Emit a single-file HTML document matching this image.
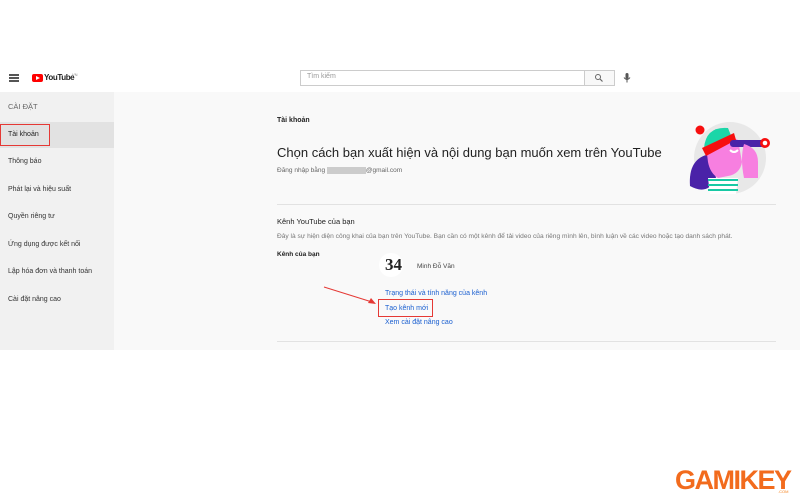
<!DOCTYPE html>
<html><head><meta charset="utf-8"><style>
*{margin:0;padding:0;box-sizing:border-box}
body{width:800px;height:500px;background:#fff;font-family:"Liberation Sans",Arial,sans-serif;position:relative;overflow:hidden;color:#222}
.a{position:absolute}
.side{left:0;top:92px;width:114px;height:258px;background:#f1f1f1}
.main{left:114px;top:92px;width:686px;height:258px;background:#f9f9f9}
.si{position:absolute;left:8px;font-size:7px;color:#333}
.link{position:absolute;left:385px;font-size:7px;color:#1a5fd0}
</style></head><body>
<div class="a" style="left:9px;top:74px;width:10px;height:1.5px;background:#555;box-shadow:0 3px 0 #555,0 6px 0 #555"></div>
<div class="a" style="left:32px;top:74px;width:11px;height:8px;background:#f00;border-radius:2px"></div>
<div class="a" style="left:36px;top:76px;width:0;height:0;border-left:4px solid #fff;border-top:2px solid transparent;border-bottom:2px solid transparent"></div>
<div class="a" style="left:44px;top:73px;font-size:8px;font-weight:bold;letter-spacing:-0.4px;color:#222">YouTube</div>
<div class="a" style="left:72px;top:72px;font-size:4px;color:#888">VN</div>
<div class="a" style="left:300px;top:70px;width:285px;height:16px;border:1px solid #ccc;background:#fff"></div>
<div class="a" style="left:307px;top:73px;font-size:7px;color:#999">Tìm kiếm</div>
<div class="a" style="left:584px;top:70px;width:31px;height:16px;border:1px solid #ccc;background:#f8f8f8"></div>
<svg class="a" style="left:594px;top:73px" width="10" height="10" viewBox="0 0 10 10"><circle cx="4" cy="4" r="2.5" fill="none" stroke="#666" stroke-width="1"/><path d="M6 6 L8.5 8.5" stroke="#666" stroke-width="1.2"/></svg>
<svg class="a" style="left:622px;top:72px" width="10" height="12" viewBox="0 0 10 12"><rect x="3.5" y="1" width="3" height="6" rx="1.5" fill="#555"/><path d="M2 5.5 Q5 9.5 8 5.5 M5 8 V10.5" stroke="#555" fill="none" stroke-width="1"/></svg>
<div class="a side"></div>
<div class="si" style="top:102px;font-size:7.5px;color:#666">CÀI ĐẶT</div>
<div class="a" style="left:0;top:122px;width:114px;height:26px;background:#e2e2e2"></div>
<div class="a" style="left:0;top:124px;width:50px;height:22px;border:1.5px solid #e53935"></div>
<div class="si" style="top:131px;color:#222">Tài khoản</div>
<div class="si" style="top:158px">Thông báo</div>
<div class="si" style="top:186px">Phát lại và hiệu suất</div>
<div class="si" style="top:213px">Quyền riêng tư</div>
<div class="si" style="top:241px">Ứng dụng được kết nối</div>
<div class="si" style="top:268px">Lập hóa đơn và thanh toán</div>
<div class="si" style="top:296px">Cài đặt nâng cao</div>
<div class="a main"></div>
<div class="a" style="left:277px;top:117px;font-size:7px;font-weight:bold">Tài khoản</div>
<div class="a" style="left:277px;top:145px;font-size:13px;color:#222">Chọn cách bạn xuất hiện và nội dung bạn muốn xem trên YouTube</div>
<div class="a" style="left:277px;top:167px;font-size:6.5px;color:#666">Đăng nhập bằng <span style="background:#ccc;color:transparent">xxxxxxxxxxxx</span>@gmail.com</div>
<div class="a" style="left:277px;top:204px;width:499px;height:1px;background:#e2e2e2"></div>
<div class="a" style="left:277px;top:217px;font-size:7.5px;color:#222">Kênh YouTube của bạn</div>
<div class="a" style="left:277px;top:233px;font-size:6.6px;color:#777;white-space:nowrap">Đây là sự hiện diện công khai của bạn trên YouTube. Bạn cần có một kênh để tải video của riêng mình lên, bình luận về các video hoặc tạo danh sách phát.</div>
<div class="a" style="left:277px;top:251px;font-size:6.5px;font-weight:bold">Kênh của bạn</div>
<div class="a" style="left:379px;top:253px;width:24px;height:24px;border-radius:50%;background:#fff"></div>
<div class="a" style="left:385px;top:255px;font-family:'Liberation Serif',serif;font-size:17px;font-weight:bold">34</div>
<div class="a" style="left:417px;top:263px;font-size:6.5px;color:#444">Minh Đỗ Văn</div>
<div class="link" style="top:290px">Trạng thái và tính năng của kênh</div>
<div class="link" style="top:305px">Tạo kênh mới</div>
<div class="a" style="left:378px;top:299px;width:55px;height:18px;border:1.5px solid #e53935"></div>
<div class="link" style="top:319px">Xem cài đặt nâng cao</div>
<svg class="a" style="left:320px;top:284px" width="60" height="25"><path d="M4 3 L52 18" stroke="#e53935" stroke-width="1"/><path d="M56 20 L48 19 L51 14 Z" fill="#e53935"/></svg>
<div class="a" style="left:277px;top:341px;width:499px;height:1px;background:#e2e2e2"></div>
<svg class="a" style="left:686px;top:118px" width="92" height="80" viewBox="0 0 92 80">
<circle cx="44" cy="40" r="36" fill="#e8e8e8"/>
<path d="M4 68 Q2 40 24 36 L30 60 Q22 78 4 68Z" fill="#4a22a8"/>
<path d="M22 60 L52 60 L50 76 L24 76Z" fill="#fff"/>
<path d="M22 62 H52 M22 67 H52 M22 72 H52" stroke="#18c9a4" stroke-width="2"/>
<path d="M20 28 Q32 10 52 22 L56 44 Q54 56 42 58 L32 60 Q24 55 22 44Z" fill="#f77fe0"/>
<path d="M18 30 Q20 8 42 10 L46 20 Z" fill="#1bd6a8"/>
<path d="M16 30 L48 15 L50 22 L20 38Z" fill="#f70f0f"/>
<circle cx="14" cy="12" r="4.5" fill="#f70f0f"/>
<path d="M44 32 Q48 36 52 32" stroke="#fff" stroke-width="2" fill="none"/>
<rect x="44" y="22" width="34" height="7" rx="3" fill="#4a22a8"/>
<circle cx="79" cy="25" r="5" fill="#f70f0f"/><circle cx="79" cy="25" r="2.3" fill="#fff"/>
<path d="M58 26 Q72 30 72 44 L72 60 L58 60 Q54 40 58 26Z" fill="#f77fe0"/>
</svg>
<div class="a" style="left:675px;top:465px;font-size:27px;font-weight:900;letter-spacing:-1.5px;color:#f26b1d;font-family:'Liberation Sans',sans-serif">GAMIKEY</div>
<div class="a" style="left:778px;top:489px;font-size:4px;color:#f5831f">.COM</div>
</body></html>
